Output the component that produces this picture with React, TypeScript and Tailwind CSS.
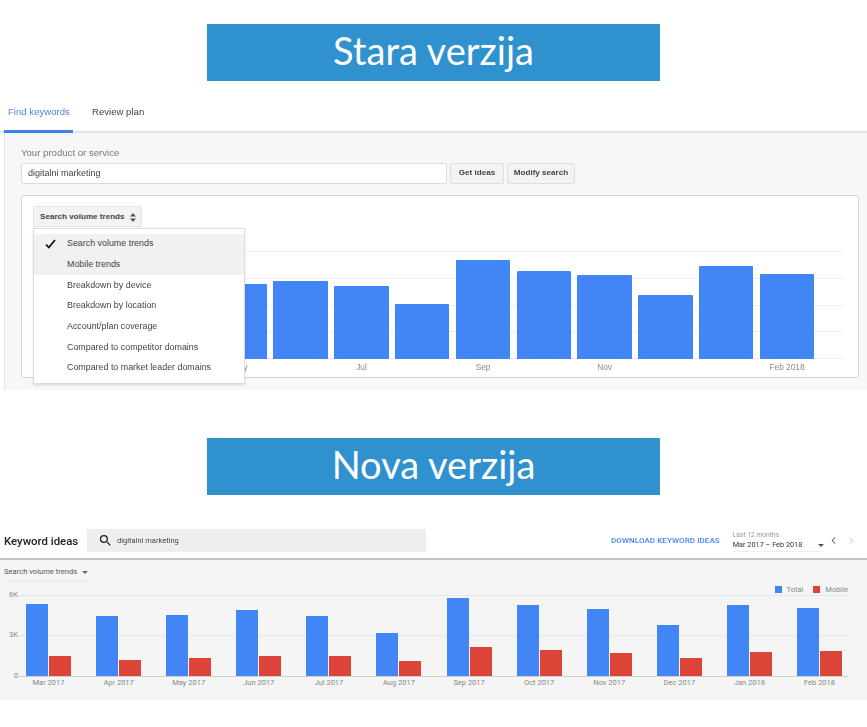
import { ChevronLeft, ChevronRight } from "lucide-react";

const oldBars = [
  { h: 81, label: "" }, { h: 71, label: "" },
  { h: 75, label: "May" }, { h: 78, label: "" }, { h: 73, label: "Jul" },
  { h: 55, label: "" }, { h: 99, label: "Sep" }, { h: 88, label: "" },
  { h: 84, label: "Nov" }, { h: 64, label: "" }, { h: 93, label: "" }, { h: 85, label: "Feb 2018" },
];

const newBars = [
  { m: "Mar 2017", t: 72, r: 20 }, { m: "Apr 2017", t: 60, r: 16 }, { m: "May 2017", t: 61, r: 18 },
  { m: "Jun 2017", t: 66, r: 20 }, { m: "Jul 2017", t: 60, r: 20 }, { m: "Aug 2017", t: 43, r: 15 },
  { m: "Sep 2017", t: 78, r: 29 }, { m: "Oct 2017", t: 71, r: 26 }, { m: "Nov 2017", t: 67, r: 23 },
  { m: "Dec 2017", t: 51, r: 18 }, { m: "Jan 2018", t: 71, r: 24 }, { m: "Feb 2018", t: 68, r: 25 },
];

const menu = [
  "Search volume trends", "Mobile trends", "Breakdown by device", "Breakdown by location",
  "Account/plan coverage", "Compared to competitor domains", "Compared to market leader domains",
];

function Banner({ text, top }: { text: string; top: string }) {
  return (
    <div className={`${top} mx-auto flex h-[57px] w-[453px] items-center justify-center bg-[#2f91cd] pb-[6px] font-['Lato',sans-serif] text-[38px] leading-none text-white`}>
      {text}
    </div>
  );
}

function OldVersion() {
  return (
    <section className="mt-[19px] font-['Liberation_Sans',sans-serif] blur-[0.3px]">
      <div className="flex h-[33px] border-b-2 border-[#e4e4e4] text-[9.6px]">
        <div className="ml-[4px] h-[33px] w-[69px] border-b-[3px] border-[#3f7fe8] pl-[4px] pt-[5px] text-[#4a86e8]">Find keywords</div>
        <div className="ml-[19px] pt-[5px] text-[#444]">Review plan</div>
      </div>
      <div className="ml-[4px] h-[257px] border-l border-[#e4e4e4] bg-[#f7f7f7] pl-[16px] pt-[13px]">
        <div className="text-[9.6px] leading-[14px] text-[#777]">Your product or service</div>
        <div className="mt-[3px] flex h-[21px]">
          <div className="flex w-[426px] items-center rounded-[2px] border border-[#dcdcdc] bg-white pl-[6px] text-[9px] text-[#444]">digitalni marketing</div>
          <div className="ml-[3px] flex w-[54px] items-center justify-center rounded-[2px] border border-[#dedede] bg-[#f3f3f3] text-[8.1px] font-bold text-[#444]">Get ideas</div>
          <div className="ml-[3px] flex w-[68px] items-center justify-center rounded-[2px] border border-[#dedede] bg-[#f3f3f3] text-[8.1px] font-bold text-[#444]">Modify search</div>
        </div>
        <div className="relative mt-[11px] h-[183px] w-[838px] rounded-[3px] border border-[#d4d4d4] bg-white">
          <div className="absolute left-[11px] top-[10px] flex h-[21px] w-[109px] items-center rounded-[2px] border border-[#e4e4e4] bg-[#f3f3f3] pl-[6px] pt-[2px] text-[8.1px] font-bold text-[#444]">
            Search volume trends
            <svg className="ml-[5px]" width="6" height="9" viewBox="0 0 6 9"><path d="M3 0 6 3.5H0zM3 9 0 5.5h6z" fill="#555" /></svg>
          </div>
          <div className="relative ml-[11px] mt-[55px] h-[108px] w-[810px]">
            {[0, 27, 54, 80, 107].map((y) => (
              <div key={y} className="absolute left-0 right-0 h-px bg-[#efefef]" style={{ top: y }} />
            ))}
            <div className="absolute bottom-0 left-[58px] flex items-end gap-[6.3px]">
              {oldBars.map((b, i) => (
                <div key={i} className="relative w-[54.5px] rounded-t-[1px] bg-[#4285f4]" style={{ height: b.h }}>
                  {b.label && (
                    <span className="absolute left-[-20px] right-[-20px] top-full pt-[2px] text-center text-[8.3px] text-[#888]">{b.label}</span>
                  )}
                </div>
              ))}
            </div>
          </div>
          <div className="absolute left-[11px] top-[32px] z-10 h-[156px] w-[212px] border border-[#dcdcdc] bg-white pt-[4.5px] shadow-sm">
            {menu.map((m, i) => (
              <div key={m} className={`relative flex h-[20.7px] items-center pl-[33px] text-[8.9px] text-[#444] ${i < 2 ? "bg-[#f1f1f1]" : ""}`}>
                {i === 0 && (
                  <svg className="absolute left-[11px] top-[5px]" width="11" height="10" viewBox="0 0 11 10"><path d="M1 5.5 3.8 8.5 10 1" fill="none" stroke="#111" strokeWidth="1.8" /></svg>
                )}
                {m}
              </div>
            ))}
          </div>
        </div>
      </div>
    </section>
  );
}

function NewVersion() {
  return (
    <section className="mt-[22px] font-['Roboto',sans-serif] blur-[0.3px]">
      <div className="flex h-[43px] items-start border-b-2 border-[#c4c4c4] pt-[12px]">
        <div className="ml-[4px] w-[83px] pt-[4px] text-[11.4px] font-medium leading-[16px] text-[#222]">Keyword ideas</div>
        <div className="flex h-[23px] w-[339px] items-center bg-[#eeeeee] pl-[11px] text-[7.5px] text-[#444]">
          <svg width="15" height="15" viewBox="0 0 24 24" fill="#222">
            <path d="M15.5 14h-.79l-.28-.27A6.471 6.471 0 0 0 16 9.5 6.5 6.5 0 1 0 9.5 16c1.61 0 3.09-.59 4.23-1.57l.27.28v.79l5 4.99L20.49 19l-4.99-5zm-6 0C7.01 14 5 11.99 5 9.5S7.01 5 9.5 5 14 7.01 14 9.5 11.99 14 9.5 14z" />
          </svg>
          <span className="ml-[4px]">digitalni marketing</span>
        </div>
        <div className="ml-[185px] pt-[6px] text-[8px] font-medium tracking-[0.08px] text-[#4285f4]">DOWNLOAD KEYWORD IDEAS</div>
        <div className="ml-[13px] h-[23px] w-[91px] border-b border-[#eeeeee] pt-[1px] text-[7.3px] leading-[10px]">
          <div className="text-[6.7px] text-[#999]">Last 12 months</div>
          <div className="flex items-center justify-between text-[#333]">
            Mar 2017 – Feb 2018
            <svg width="6" height="3" viewBox="0 0 6 3"><path d="M0 0h6L3 3z" fill="#555" /></svg>
          </div>
        </div>
        <ChevronLeft size={11} strokeWidth={2.2} className="ml-[4px] mt-[6px] text-[#555]" />
        <ChevronRight size={11} strokeWidth={2} className="ml-[7px] mt-[6px] text-[#bbb]" />
      </div>
      <div className="relative h-[140px] bg-[#f5f5f5]">
        <div className="ml-[4px] flex h-[22px] w-[85px] items-center border-b border-[#e8e8e8] pt-[3px] text-[7.6px] text-[#555]">
          Search volume trends
          <svg className="ml-[5px]" width="6" height="3" viewBox="0 0 6 3"><path d="M0 0h6L3 3z" fill="#666" /></svg>
        </div>
        <div className="absolute right-[19px] top-[24px] flex items-center text-[7.5px] text-[#888]">
          <span className="mr-[5px] h-[7px] w-[7px] bg-[#4285f4]" />Total
          <span className="ml-[10px] mr-[5px] h-[7px] w-[7px] bg-[#db4437]" />Mobile
        </div>
        <div className="relative ml-[19px] mt-[13px] h-[82px] w-[830px]">
          {[{ y: 0, t: "6K" }, { y: 40, t: "3K" }, { y: 80.5, t: "0" }].map((g) => (
            <div key={g.t} className={`absolute left-0 right-0 ${g.t === "0" ? "h-[1.5px] bg-[#cfcfcf]" : "h-px bg-[#e6e6e6]"}`} style={{ top: g.y }}>
              <span className="absolute right-full top-[-5px] mr-[1px] text-[7.5px] leading-[10px] text-[#888]">{g.t}</span>
            </div>
          ))}
          <div className="absolute bottom-[1px] left-[7px] flex">
            {newBars.map((b) => (
              <div key={b.m} className="relative flex w-[70.1px] items-end gap-[1px]">
                <div className="w-[22px] bg-[#4285f4]" style={{ height: b.t }} />
                <div className="w-[22px] bg-[#db4437]" style={{ height: b.r }} />
                <span className="absolute left-0 top-full w-[45px] whitespace-nowrap pt-[2px] text-center text-[7.5px] leading-[10px] text-[#888]">{b.m}</span>
              </div>
            ))}
          </div>
        </div>
      </div>
    </section>
  );
}

export default function App() {
  return (
    <div className="h-[727px] w-[867px] overflow-hidden whitespace-nowrap bg-white">
      <Banner text="Stara verzija" top="mt-[24px]" />
      <OldVersion />
      <Banner text="Nova verzija" top="mt-[48px]" />
      <NewVersion />
    </div>
  );
}
